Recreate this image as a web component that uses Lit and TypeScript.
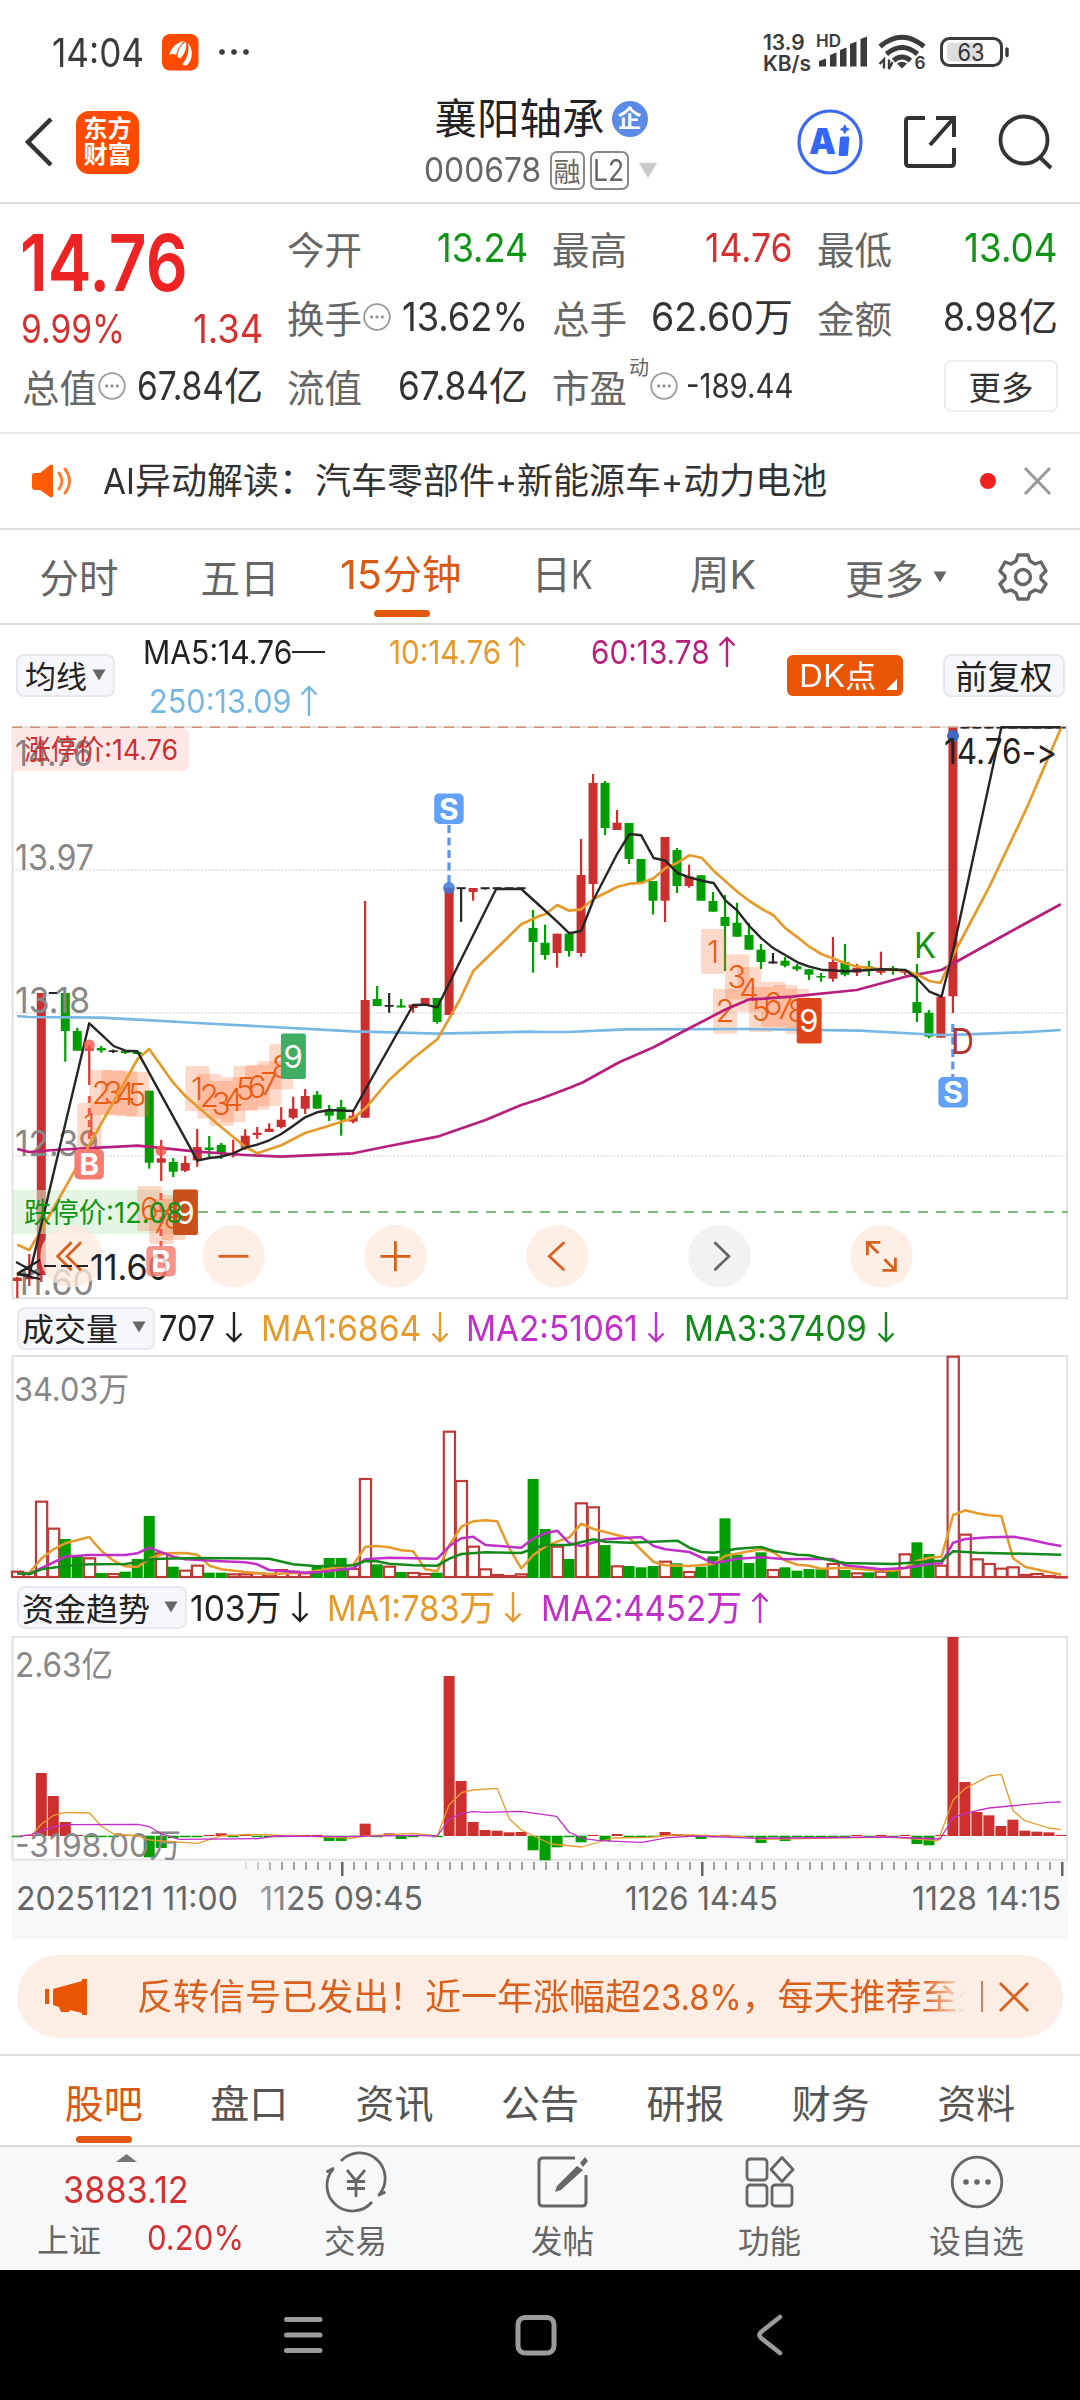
import { LitElement, html, svg, css, nothing } from "lit";
import { customElement, property } from "lit/decorators.js";

/* ---------- text with condensed latin runs ---------- */
const CJK = /[\u3000-\u9fff\uff00-\uffef]/;
function runs(text: string) {
  const out: { t: string; cjk: boolean }[] = [];
  for (const ch of text) {
    const cjk = CJK.test(ch);
    const last = out[out.length - 1];
    if (last && last.cjk === cjk) last.t += ch;
    else out.push({ t: ch, cjk });
  }
  return out;
}

@customElement("mi-text")
class MiText extends LitElement {
  @property() text = "";
  @property({ type: Number }) w = 0;
  static styles = css`
    :host { display: inline-block; white-space: pre; line-height: 1; }
    .n { display: inline-block; transform-origin: 0 50%; }
    .c { display: inline-block; }
  `;
  render() {
    return runs(this.text).map((r) => html`<span class=${r.cjk ? "c" : "n"}>${r.t}</span>`);
  }
  updated() {
    const ns = [...this.renderRoot.querySelectorAll<HTMLElement>(".n")];
    const cs = [...this.renderRoot.querySelectorAll<HTMLElement>(".c")];
    const nat = ns.reduce((a, e) => a + e.offsetWidth, 0);
    const cw = cs.reduce((a, e) => a + e.offsetWidth, 0);
    const s = this.w && nat ? (this.w - cw) / nat : 0.86;
    for (const e of ns) {
      const w = e.offsetWidth;
      e.style.transform = `scaleX(${s})`;
      e.style.marginRight = `${-(1 - s) * w}px`;
    }
  }
}
const mi = (text: string, w = 0, cls = "") => html`<mi-text class=${cls} .text=${text} .w=${w}></mi-text>`;

/* ---------- chart geometry ---------- */
const RED = "#cb2f2e", GREEN = "#009e00", BLACK = "#262626", ORANGE = "#e59a2b", MAG = "#b71f7d", BLUE = "#77b7e4", PINK = "#c02fc8", DGREEN = "#148a1c";
const cx = (i: number) => 17.3 + 11.995 * i;

/* index, colour, body top, body bottom, high, low */
const candles: [number, string, number, number, number, number][] = [
  [0, "r", 1277.7, 1281, 1277, 1298], [1, "r", 1277, 1279.3, 1254, 1286], [2, "r", 993, 1275, 993, 1282],
  [3, "k", 992, 994, 992, 994], [4, "g", 993, 1031, 993, 1061.7], [5, "g", 1031, 1050.7, 1027.7, 1050.7],
  [6, "r", 1048.5, 1050.8, 1045, 1085], [7, "g", 1048, 1050.5, 1046, 1052.7], [8, "k", 1050.3, 1052, 1049.5, 1053],
  [9, "g", 1051, 1053, 1050, 1054], [10, "g", 1052, 1054, 1051, 1054], [11, "g", 1090.7, 1162.7, 1090.7, 1168.7],
  [12, "r", 1158.3, 1162.7, 1140, 1181], [13, "g", 1162, 1171.7, 1158, 1177], [14, "r", 1163, 1170.7, 1156, 1172],
  [15, "r", 1147, 1160.3, 1129, 1166.7], [16, "g", 1147.5, 1150, 1136, 1158], [17, "g", 1145, 1153, 1143, 1159],
  [18, "r", 1153, 1155.3, 1139.7, 1157.5], [19, "r", 1135.7, 1147.7, 1129.3, 1150], [20, "r", 1132.7, 1135, 1127, 1138.7],
  [21, "r", 1128.7, 1132, 1123.3, 1132], [22, "r", 1119.7, 1127, 1107, 1128.5], [23, "r", 1108.7, 1117.7, 1096.7, 1119.3],
  [24, "r", 1096, 1108.7, 1089, 1114], [25, "g", 1094.7, 1108.7, 1091, 1108.7], [26, "g", 1110, 1115.7, 1105, 1121],
  [27, "g", 1107, 1119.7, 1100, 1135.7], [28, "r", 1115.7, 1121.7, 1112, 1123.3], [29, "r", 1000, 1117.7, 901, 1117.7],
  [30, "g", 999, 1006, 986, 1006], [31, "k", 1005, 1006.8, 993, 1012.7], [32, "g", 1005.5, 1007.5, 999, 1007.5],
  [33, "r", 1004.5, 1008, 1004, 1012.7], [34, "r", 998, 1004.7, 998, 1004.7], [35, "g", 998, 1022, 998, 1023.7],
  [36, "r", 888.3, 1015, 888.3, 1015], [37, "k", 887.2, 889.2, 888, 922], [38, "r", 888, 892, 888, 900.7],
  [39, "k", 887.2, 889.2, 888, 889.6], [40, "k", 887.2, 889.2, 888, 889], [41, "k", 887.2, 889.2, 888, 889], [42, "k", 887.2, 889.2, 888, 889],
  [43, "g", 928, 942, 910, 972.7], [44, "g", 942.7, 955, 924.7, 959.7], [45, "r", 933.7, 953, 933.7, 967.7],
  [46, "g", 933.7, 951, 933.7, 956.7], [47, "r", 875, 953, 839, 956.7], [48, "r", 783, 884, 774, 899],
  [49, "g", 783, 828, 781, 835], [50, "r", 822.7, 830, 810, 830], [51, "g", 823, 859, 823, 864],
  [52, "g", 859, 882, 859, 882], [53, "g", 881, 900.7, 881, 914.7], [54, "r", 837, 900.7, 837, 922],
  [55, "g", 850, 886, 848, 893], [56, "r", 876.5, 886, 864.7, 887.7], [57, "g", 875.3, 900.7, 875.3, 900.7],
  [58, "g", 901, 911.7, 892, 911.7], [59, "g", 917, 926, 895, 971], [60, "g", 922.7, 936.7, 902.7, 936.7],
  [61, "g", 935, 949.7, 923, 949.7], [62, "g", 949.7, 962, 944, 969], [63, "k", 961.5, 963.5, 953, 963.5],
  [64, "g", 960.7, 965.7, 957, 967.3], [65, "g", 966.3, 969.3, 964, 971], [66, "g", 969.3, 974.7, 969.3, 980],
  [67, "g", 976, 977.6, 973, 981.7], [68, "r", 962, 978.7, 937, 981.7], [69, "g", 962, 974.7, 944, 976.3],
  [70, "r", 967.7, 972.7, 964, 976], [71, "g", 966.3, 971, 960.7, 976], [72, "r", 969.3, 972.7, 951.7, 974.7],
  [73, "g", 968, 970, 966, 974.7], [74, "r", 970, 972.7, 970, 975], [75, "g", 1002, 1013, 964, 1022],
  [76, "g", 1012.7, 1036.7, 1010, 1038.3], [77, "r", 996.7, 1037.7, 996.7, 1037.7], [78, "r", 728, 996.3, 728, 1013],
];
for (let i = 79; i < 88; i++) candles.push([i, "k", 727, 728.6, 727, 728.6]);
const col: Record<string, string> = { r: RED, g: GREEN, k: BLACK };

/* Traces are stored in two halves, each on a 2.904 × 3 grid. */
type P = number[];
const left = (y0: number, ...v: P) => { const o: P = []; for (let i = 0; i < v.length; i += 2) o.push(v[i] / 2.904, y0 + v[i + 1] / 3); return o; };
const right = (y0: number, ...v: P) => { const o: P = []; for (let i = 0; i < v.length; i += 2) o.push(540 + v[i] / 2.904, y0 + v[i + 1] / 3); return o; };
const wide = (y0: number, ...v: P) => { const o: P = []; for (let i = 0; i < v.length; i += 2) o.push(v[i] / 1.452, y0 + v[i + 1] / 3); return o; };
const line = (p: P, c: string, w = 2.7) => svg`<polyline points=${p.map((n) => n.toFixed(1)).join(" ")} fill="none" stroke=${c} stroke-width=${w} stroke-linejoin="round"/>`;

const ma5 = [
  ...left(1000, 50, 822, 85, 826, 259, 70, 294, 103, 330, 138, 364, 152, 399, 154, 573, 482, 608, 474, 643, 470, 677, 460, 712, 443, 747, 434, 782, 421, 817, 402, 851, 378, 886, 352, 921, 337, 956, 330, 1026, 333, 1200, 15, 1235, 14, 1270, 22),
  ...left(710, 1441, 537, 1514, 537),
  ...right(710, 0, 588, 50, 635, 85, 670, 120, 663, 155, 570, 190, 500, 225, 430, 260, 372, 294, 376, 330, 444, 364, 452, 399, 489, 434, 502, 469, 512, 504, 519, 539, 572, 573, 602, 608, 648, 643, 685, 678, 715, 748, 757, 782, 770, 817, 779, 887, 784, 957, 780, 992, 778, 1061, 780, 1096, 806, 1131, 845, 1166, 860, 1200, 720, 1340, 52, 1512, 52),
];
const ma10 = [
  ...left(1000, 50, 734, 85, 750, 120, 690, 399, 178, 433, 147, 503, 248, 538, 288, 643, 382, 712, 440, 747, 460, 817, 436, 886, 399, 956, 377, 1026, 354, 1061, 325, 1130, 240, 1200, 175, 1270, 118, 1335, 0),
  ...left(710, 1375, 782, 1514, 643),
  ...right(710, 0, 617, 15, 613, 50, 585, 85, 602, 120, 598, 155, 567, 190, 549, 225, 530, 260, 521, 295, 519, 330, 505, 364, 475, 399, 458, 434, 436, 469, 443, 504, 482, 573, 545, 608, 573, 643, 596, 678, 616, 713, 655, 748, 682, 782, 710, 817, 732, 887, 760, 922, 770, 992, 778, 1061, 782, 1096, 794, 1131, 813, 1163, 819, 1200, 735, 1305, 530, 1415, 290, 1514, 52),
];
const ma60 = [
  ...left(1000, 50, 447, 85, 456, 155, 450, 399, 437, 573, 455, 712, 465, 817, 470, 1026, 460, 1130, 438, 1270, 410, 1410, 360, 1514, 315),
  ...right(1000, 0, 297, 90, 262, 125, 247, 230, 187, 330, 142, 435, 84, 540, 28),
  ...right(710, 608, 868, 650, 866, 730, 860, 920, 840, 1061, 800, 1166, 780, 1350, 674, 1512, 583),
];
const ma250 = [
  ...left(1000, 50, 48, 85, 51, 294, 53, 400, 59, 573, 69, 1026, 94, 1270, 101, 1540, 95),
  ...right(1000, 0, 96, 80, 96, 250, 88, 600, 87, 930, 92, 1160, 105, 1240, 103, 1400, 97, 1512, 90),
];

/* volume bar tops, in thirds of a pixel below y=1300 */
const vol = "r815 r819 r605 r686 g717 g768 r775 g819 r822 g815 g777 g648 r760 g800 r812 r797 g818 g818 r823 r823 r820 r824 r810 r815 r820 g797 g774 g774 r807 r537 g793 r800 g816 r819 r822 g818 r395 r543 r740 r808 r825 r828 r823 g537 g687 r740 g777 r610 r622 g735 r799 g798 g802 g798 r785 g790 r816 g800 g769 g655 g764 g789 g757 r810 g802 g812 g807 g808 r792 g810 r820 g817 r815 g812 r763 g727 g762 r797 r170 r704 r778 r792 r806 r802 r825 r822 r828 r831".split(" ");
const v1 = [
  ...left(1300, 50, 822, 85, 818, 120, 776, 155, 748, 190, 730, 259, 711, 294, 752, 330, 782, 364, 799, 399, 801, 433, 776, 480, 760, 538, 759, 573, 764, 608, 797, 643, 808, 712, 816, 782, 822, 886, 818, 956, 806, 1026, 794, 1061, 740, 1095, 738, 1130, 742, 1165, 751, 1200, 754, 1235, 808, 1270, 814, 1305, 735, 1340, 680, 1374, 664, 1410, 661, 1444, 664, 1479, 745, 1514, 805, 1549, 765),
  ...right(1300, 15, 740, 50, 725, 85, 712, 120, 671, 155, 687, 260, 715, 330, 786, 364, 796, 434, 798, 504, 792, 539, 767, 643, 747, 678, 757, 713, 782, 748, 794, 782, 797, 817, 806, 887, 803, 957, 810, 1026, 812, 1061, 803, 1096, 782, 1131, 773, 1166, 770, 1200, 645, 1235, 631, 1270, 640, 1305, 646, 1340, 649, 1374, 775, 1410, 801, 1514, 824),
];
const v2 = [
  ...left(1300, 50, 820, 85, 822, 190, 770, 259, 765, 364, 765, 399, 760, 433, 743, 503, 770, 538, 778, 643, 784, 712, 787, 747, 793, 782, 810, 886, 818, 930, 816, 1026, 805, 1061, 778, 1130, 773, 1270, 776, 1305, 738, 1340, 715, 1374, 710, 1410, 735, 1514, 743, 1549, 715),
  ...right(1300, 15, 700, 50, 692, 85, 730, 120, 738, 190, 718, 294, 711, 330, 738, 364, 748, 434, 756, 504, 790, 573, 776, 643, 772, 713, 778, 817, 776, 852, 778, 887, 796, 992, 808, 1061, 804, 1131, 792, 1166, 790, 1200, 728, 1235, 717, 1305, 712, 1374, 710, 1410, 716, 1480, 732, 1514, 738),
];
const v3 = [
  ...left(1300, 50, 820, 85, 822, 120, 808, 190, 798, 259, 793, 364, 792, 399, 787, 433, 778, 468, 776, 573, 774, 782, 776, 851, 793, 921, 799, 1026, 796, 1061, 783, 1095, 784, 1130, 791, 1200, 796, 1270, 797, 1305, 776, 1340, 762, 1410, 757, 1514, 759, 1549, 745),
  ...right(1300, 15, 735, 85, 735, 155, 718, 190, 725, 260, 728, 399, 722, 434, 743, 469, 756, 504, 758, 573, 746, 643, 741, 678, 753, 748, 764, 782, 766, 852, 783, 887, 789, 1026, 792, 1096, 787, 1166, 782, 1200, 754, 1270, 758, 1514, 764),
];

/* fund flow bar ends, in thirds of a pixel below y=1580 (zero line at 767) */
const fund: Record<number, number> = { 2: 579, 3: 648, 4: 726, 11: 831, 12: 803, 13: 773, 17: 760, 26: 782, 27: 782, 29: 731, 31: 760, 32: 776, 36: 288, 37: 603, 38: 726, 39: 750, 40: 752, 41: 757, 42: 756, 43: 810, 44: 840, 45: 801, 47: 786, 49: 782, 50: 762, 51: 773, 52: 773, 54: 756, 55: 762, 57: 776, 62: 788, 64: 782, 75: 791, 76: 795, 78: 171, 79: 606, 80: 696, 81: 706, 82: 738, 83: 719, 84: 752, 85: 755, 86: 757 };
const smallNeg = new Set([0, 6, 7, 8, 14, 15, 18, 20, 21, 22, 28, 30, 33, 35, 46, 53, 58, 60, 61, 63, 65, 66, 67, 68, 69, 71, 73]);
const f1 = wide(1580, 45, 768, 60, 733, 78, 706, 95, 697, 130, 699, 147, 738, 165, 762, 200, 768, 217, 780, 265, 787, 287, 790, 320, 768, 360, 763, 460, 770, 510, 775, 530, 768, 600, 760, 635, 768, 652, 675, 670, 638, 687, 630, 722, 625, 740, 718, 757, 750, 775, 768, 800, 792, 845, 801, 890, 774, 940, 772, 980, 765, 1000, 765, 1080, 770, 1105, 778, 1290, 771, 1362, 782, 1384, 660, 1401, 626, 1436, 588, 1454, 583, 1471, 692, 1488, 722, 1523, 744, 1540, 749);
const f2 = wide(1580, 25, 770, 45, 764, 78, 740, 100, 734, 200, 733, 217, 740, 235, 762, 260, 778, 375, 776, 400, 768, 500, 770, 600, 766, 635, 768, 652, 718, 670, 700, 687, 695, 705, 697, 757, 694, 808, 709, 826, 756, 845, 775, 870, 782, 932, 787, 970, 773, 1010, 768, 1100, 775, 1290, 771, 1365, 777, 1384, 713, 1401, 700, 1436, 684, 1523, 667, 1540, 666);

const label = (t: string, x: number, y: number, w: number, size: number, fill: string, extra = "") =>
  svg`<text class=${extra} x=${x} y=${y} font-size=${size} fill=${fill} textLength=${w} lengthAdjust="spacingAndGlyphs">${t}</text>`;

/* countdown tags: index, top, digit */
const tags: [number, number, string][] = [
  [6, 1102.7, "1"], [7, 1070, "2"], [8, 1070, "3"], [9, 1071, "4"], [10, 1072, "5"], [11, 1186, "6"], [12, 1199, "7"], [13, 1195, "8"],
  [15, 1066, "1"], [16, 1073.7, "2"], [17, 1081, "3"], [18, 1077.3, "4"], [19, 1066, "5"], [20, 1064.7, "6"], [21, 1061, "7"], [22, 1044.3, "8"],
  [58, 929, "1"], [59, 988.7, "2"], [60, 954.3, "3"], [61, 967, "4"], [62, 987, "5"], [63, 981.7, "6"], [64, 985, "7"], [65, 988.7, "8"],
];
const nines: [number, number, string][] = [[14, 1189.5, "#c9501a"], [23, 1033.5, "#40ad64"], [66, 998, "#df4518"]];
const sq = (x: number, y: number, t: string, fill: string) => svg`<rect x=${x} y=${y} width="29.5" height="30.5" rx="5" fill=${fill}/>
  <text class="b" x=${x + 14.7} y=${y + 26} font-size="30" fill="#fff" text-anchor="middle">${t}</text>`;
const ball = (x: number, body: unknown, grey = false) => svg`<g transform="translate(${x} 1256.3)"><circle r="31.3" fill=${grey ? "#ededed" : "#fdeade"} opacity=".75"/>
  <g fill="none" stroke=${grey ? "#666" : "#d9601d"} stroke-width="2.8">${body}</g></g>`;

const info = html`<svg class="info" width="28" height="28" viewBox="0 0 28 28"><circle cx="14" cy="14" r="12.8" fill="none" stroke="#999" stroke-width="1.8"/><g fill="#999"><circle cx="8.6" cy="14" r="1.7"/><circle cx="14" cy="14" r="1.7"/><circle cx="19.4" cy="14" r="1.7"/></g></svg>`;
const tri = (c = "") => html`<svg class="tri ${c}" width="14" height="12" viewBox="0 0 14 12"><path d="M.5 .5h13L7 11.5z" fill="currentColor"/></svg>`;
const arrow = (dir: string) => html`<svg class="arrow" width="18" height="34" viewBox="0 0 18 34"><path d=${dir === "up" ? "M9 32V3M1.5 10.5 9 3l7.500 7.500" : "M9 1v29M1.500 22.500 9 30l7.500-7.500"} fill="none" stroke="currentColor" stroke-width="2.400"/></svg>`;

interface Leg { gap: number; t: string; w: number; c: string; ag?: number; dir?: string }
const legend = (items: Leg[]) => items.map((l) => html`<span class="leg" style="margin-left:${l.gap}px;color:${l.c}">${mi(l.t, l.w)}${l.dir ? html`<span class="ar" style="margin-left:${l.ag}px">${arrow(l.dir)}</span>` : nothing}</span>`);

@customElement("app-root")
class AppRoot extends LitElement {
  static styles = css`
    :host { display: block; width: 1080px; height: 2400px; overflow: hidden; background: #fff; color: #333; font-family: Inter, "Noto Sans CJK SC", sans-serif; font-weight: 400; }
    * { box-sizing: border-box; }
    svg { display: block; flex: none; overflow: visible; }
    .row { display: flex; align-items: center; }
    .status { height: 92px; padding: 12px 71px 0 52px; color: #3b3b3b; }
    .time { font-size: 39px; margin-right: 18px; }
    .dots { margin-left: 20px; }
    .grow { flex: 1; }
    .speed { font-size: 21px; font-weight: 600; display: flex; flex-direction: column; gap: 0; margin-right: 6px; padding-top: 2px; }
    .sig { margin-right: 10px; }
    .wifi { margin-right: 13px; }
    .st { font: 600 17px Inter, sans-serif; }
    .bt { font: 400 24px Inter, sans-serif; }
    .top { height: 112px; border-bottom: 2px solid #d9d9d9; padding: 0 28px 10px 24px; }
    .logo { width: 63px; height: 63px; border-radius: 13px; background: #ff4a00; color: #fff; font-size: 24px; font-weight: 700; line-height: 26px; text-align: center; padding-top: 5px; margin-left: 23px; }
    .name { flex: 1; display: flex; flex-direction: column; align-items: center; padding: 4px 0 0 146px; }
    .title { font-size: 42.500px; line-height: 52px; color: #222; height: 52px; }
    .qi { width: 36px; height: 36px; border-radius: 50%; background: #5b8be5; color: #fff; font-size: 24px; font-weight: 700; line-height: 36px; text-align: center; margin-left: 7px; }
    .code { font-size: 34px; color: #666; height: 50px; }
    .box { border: 2px solid #888; border-radius: 7px; height: 39px; width: 35px; display: flex; align-items: center; justify-content: center; font-size: 27px; margin-left: 8px; }
    .box.l2 { width: 39px; margin-left: 5px; font-size: 30px; }
    .code .tri { color: #ccc; margin-left: 9px; width: 20px; height: 17px; }
    .ai { margin-right: 40px; } .share { margin-right: 41px; }
    .ait { font: 900 36px Inter, sans-serif; }
    .quote { height: 230px; border-bottom: 2px solid #e9e9e9; padding: 9px 22px 0 23px; display: grid; grid-template-columns: repeat(4, 1fr); grid-template-rows: 69px 69px 69px; column-gap: 25px; font-size: 38px; color: #333; }
    .cell { display: flex; align-items: center; justify-content: space-between; }
    .cell .l { color: #666; display: flex; align-items: center; font-size: 37.500px; margin-left: -1px; }
    .cell .v { font-size: 40px; }
    .info { margin-left: 1px; }
    .mix { font-size: 39px; }
    .g { color: #0f9414; } .r { color: #d3312f; }
    .price { font-size: 79px; font-weight: 600; color: #ee2424; padding-top: 1px; margin-left: -3px; }
    .chg { font-size: 40px; padding-top: 25px; margin-left: -2px; }
    .dong { font-size: 20px; align-self: flex-start; margin: -6px 0 0 2px; }
    .pe { font-size: 34px; }
    .more { width: 114px; height: 52px; border: 2px solid #ececec; border-radius: 7px; margin-left: auto; display: flex; align-items: center; justify-content: center; font-size: 32.500px; }
    .news { height: 96px; border-bottom: 2px solid #dcdcdc; padding: 0 29px 0 32px; font-size: 36px; }
    .news mi-text { margin-left: 31px; }
    .dot { width: 16px; height: 16px; border-radius: 50%; background: #f02020; margin-right: 28px; }
    .tabs { height: 95px; border-bottom: 2px solid #dcdcdc; font-size: 39.500px; color: #666; }
    .tab { width: 161px; height: 93px; display: flex; align-items: center; justify-content: center; padding-right: 3px; padding-bottom: 2px; }
    .on { color: #d95a14; position: relative; }
    .on::after { content: ""; position: absolute; bottom: 6px; left: 50%; width: 56px; margin-left: -29px; height: 7px; border-radius: 4px; background: #e2580f; }
    .tri { color: #666; }
    .ma { height: 100px; padding: 0 15px 0 16px; font-size: 33px; display: flex; }
    .btn { background: #f6f7fa; border: 2px solid #e6e8ec; border-radius: 8px; height: 43px; display: flex; align-items: center; font-size: 32px; color: #222; flex: none; padding-bottom: 2px; }
    .ma .btn { margin-top: 29px; }
    .avg { width: 99px; padding-left: 7px; font-size: 31px; } .avg .tri { margin-left: 5px; }
    .lines { width: 672px; padding-top: 10px; display: flex; flex-direction: column; gap: 15px; flex: none; }
    .lines .row { height: 34px; }
    .leg { display: flex; align-items: center; }
    .dk { margin-top: 30px; width: 116px; height: 41px; background: #e95504; border-radius: 6px; color: #fff; font-size: 31px; padding: 0 6px 6px 12px; display: flex; justify-content: space-between; flex: none; }
    .dk mi-text { align-self: center; padding-top: 6px; } .dk svg { align-self: flex-end; }
    .fq { margin-left: auto; width: 122px; padding-left: 10px; font-size: 32.500px; }
    .lg { height: 52px; padding-left: 17px; font-size: 36px; }
    .lg .btn { padding-left: 3px; }
    .vb { width: 138px; } .fb { width: 170px; }
    .lg .btn .tri { margin-left: 14px; }
    text { font-family: Inter, "Noto Sans CJK SC", sans-serif; } .b { font-weight: 700; } .lt { font-weight: 300; } .raw { font-feature-settings: "calt" 0; }
    .banner { margin: 16px 17px; height: 83px; border-radius: 42px; background: #fdeee5; color: #d9601d; font-size: 36px; padding: 0 34px 0 28px; }
    .clip { width: 838px; overflow: hidden; margin-left: 50px; line-height: 50px; -webkit-mask-image: linear-gradient(90deg, #000 94%, transparent 99%); mask-image: linear-gradient(90deg, #000 94%, transparent 99%); }
    .bar { width: 2px; height: 31px; background: #df8150; margin: 0 16px 0 7px; }
    .sub { height: 91px; border-top: 2px solid #dcdcdc; font-size: 39px; color: #555; padding: 0 31px; }
    .sub .tab { flex: 1; height: 89px; padding: 0; } .sub .on { color: #d95a14; } .sub .on::after { bottom: 2px; margin-left: -28px; }
    .foot { height: 125px; border-top: 2px solid #d9d9d9; background: #f7f8fa; color: #666; font-size: 31.500px; display: flex; }
    .idx { width: 251px; display: flex; flex-direction: column; }
    .idx .up { margin: 7px 0 0 116px; }
    .p { font-size: 37px; margin: 9px 0 0 63px; line-height: 37px; height: 40px; }
    .idx .row { padding-left: 37px; font-size: 32px; height: 46px; margin-top: 4px; } .idx .row .r { font-size: 34px; margin-left: 46px; }
    .act { width: 207px; display: flex; flex-direction: column; align-items: center; padding: 8px 0 0 2px; gap: 11px; line-height: 44px; }
    .nav { height: 130px; background: #000; }
  `;

  private mainChart() {
    return html`<svg width="1080" height="577" viewBox="0 725 1080 577">
      <g fill="none" stroke="#e2e2e2" stroke-width="2"><path d="M12.500 727V1298.300H1067V727" /><path d="M12 727H1067" /></g>
      <path d="M12 870H1067M12 1013H1067M12 1156H1067" stroke="#ddd" stroke-width="1.500" stroke-dasharray="2 1.500" />
      <path d="M12 727.300H1067" stroke="#d29078" stroke-width="1.500" stroke-dasharray="10 8" />
      <path d="M198 1212H1068" stroke="#7fbb7f" stroke-width="2" stroke-dasharray="10 8" />
      <path d="M12 728H183a6 6 0 0 1 6 6V765a6 6 0 0 1-6 6H12z" fill="#fde8e7"/>
      ${label("14.76", 15, 766, 78, 36, "#8a8080")}${label("13.97", 15, 870, 79, 36, "#888")}
      ${label("涨停价:14.76", 24, 760, 154, 28, "#cf2e2e")}
      ${candles.map(([i, c, a, b, h, l]) => svg`<rect x=${cx(i) - 4.5} y=${a} width="9" height=${b - a} fill=${col[c]}/><rect x=${cx(i) - 1.1} y=${h} width="2.200" height=${l - h} fill=${col[c]}/>`)}
      ${label("13.18", 15, 1013, 75, 36, "#888")}${label("12.39", 15, 1156, 84, 36, "#888")}${label("11.60", 15, 1295, 79, 36, "#888")}
      <path d="M12 1190H182V1234H12z" fill="#cdeccd" opacity=".55" />
      ${tags.map(([i, y]) => svg`<rect x=${cx(i) - 12} y=${y} width="24.200" height="45" rx="2" fill="#fb7035" opacity=".27"/>`)}
      ${tags.map(([i, y, t]) => svg`<text class="lt" x=${cx(i)} y=${y + 33.5} font-size="31" fill="#ec5b12" text-anchor="middle">${t}</text>`)}
      <g stroke="#ee5a4c" stroke-width="3" stroke-dasharray="7 5"><path d="M89.300 1096V1149M161 1193V1246" /></g>
      <g stroke="#5e96e4" stroke-width="3.200" stroke-dasharray="8 4.500"><path d="M449 825V888M952.800 1024V1077" /></g>
      ${line(ma250, BLUE)}${line(ma60, MAG)}${line(ma10, ORANGE)}${line(ma5, BLACK, 2.4)}
      ${nines.map(([i, y, f]) => svg`<rect x=${cx(i) - 12.3} y=${y} width="25" height="45.500" rx="2" fill=${f}/><text x=${cx(i)} y=${y + 34} font-size="31" fill="#fff" text-anchor="middle">9</text>`)}
      ${label("跌停价:12.08", 24, 1223, 159, 28, "#119411")}
      <circle cx="89.300" cy="1045" r="5.500" fill="#f0554a" opacity=".8" /><circle cx="161" cy="1150.700" r="5.500" fill="#f0554a" opacity=".8" />
      <circle cx="449" cy="888" r="6" fill="#3f74d8" opacity=".85" /><circle cx="953" cy="736" r="6" fill="#3f66c8" />
      ${sq(74.4, 1149, "B", "#f77c70")}
      ${sq(434.2, 793.5, "S", "#62a1f8")}${sq(938.4, 1077, "S", "#62a1f8")}
      ${label("K", 914, 958, 22, 35, "#119411")}${label("D", 951, 1054, 23, 35, "#ad3532")}
      ${label("14.76->", 944, 764, 113, 35, "#222", "raw")}
      ${ball(71.6, svg`<path d="M0 -14 -14 0 0 14M9.500 -14 -4.500 0 9.500 14"/>`)}
      ${ball(233.5, svg`<path d="M-15 0H15"/>`)}${ball(395.4, svg`<path d="M-15 0H15M0 -15V15"/>`)}
      ${ball(557.3, svg`<path d="M7 -14 -8 0 7 14"/>`)}${ball(719.4, svg`<path d="M-5 -14 9.500 0-5 14"/>`, true)}
      ${ball(881.4, svg`<path d="M-14 -1V-14H-1M-14-14-3-3M14 1.500V14H1M14 14 3 3"/>`)}
      <path d="M17 1274 40 1260M17 1274 40 1279M16 1262 40 1275M44 1266H56M61 1266H72M77 1266H88" stroke="#222" stroke-width="2.200" fill="none" />
      ${label("11.60", 90, 1280, 79, 36, "#222")}
      <g opacity=".82">${sq(146.3, 1246, "B", "#f77c70")}</g>
    </svg>`;
  }

  private volChart() {
    return html`<svg width="1080" height="226" viewBox="0 1354 1080 226">
      <path d="M12.500 1577V1356H1067V1577" fill="none" stroke="#e2e2e2" stroke-width="2" />
      ${label("34.03万", 14, 1401, 115, 33, "#888")}
      ${vol.map((v, i) => {
        const y = 1300 + +v.slice(1) / 3, x = cx(i);
        return v[0] === "g" ? svg`<rect x=${x - 5.5} y=${y} width="11" height=${1578 - y} fill=${GREEN}/>`
          : svg`<rect x=${x - 5.3} y=${y} width="11.200" height=${Math.max(0.5, 1577 - y)} fill="#fff" stroke="#bd3a38" stroke-width="2.200"/>`;
      })}
      ${line(v1, ORANGE, 2.5)}${line(v2, PINK, 2.5)}${line(v3, DGREEN, 2.5)}
    </svg>`;
  }

  private fundChart() {
    const z = 1835.7;
    return html`<svg width="1080" height="304" viewBox="0 1635 1080 304">
      <defs><linearGradient id="fade" gradientUnits="userSpaceOnUse" x1="240" x2="300" y1="0" y2="0"><stop offset="0" stop-color="#666" stop-opacity=".1"/><stop offset=".35" stop-color="#666" stop-opacity=".6"/><stop offset="1" stop-color="#666"/></linearGradient></defs>
      <rect x="12" y="1861" width="1056" height="78" fill="#f7f8fa" />
      <rect x="12.500" y="1637" width="1054.500" height="222.700" fill="none" stroke="#e2e2e2" stroke-width="2" />
      ${label("2.63亿", 15, 1677, 98, 34, "#888")}
      ${Array.from({ length: 88 }, (_, i) => {
        const e = fund[i] ? 1580 + fund[i] / 3 : smallNeg.has(i) ? z + 1.2 : z - 0.8;
        const neg = e > z;
        return svg`<rect x=${cx(i) - 5.5} y=${neg ? z : e} width="11" height=${Math.abs(e - z) + 0.3} fill=${neg ? GREEN : RED}/>`;
      })}
      ${label("-3198.00万", 15, 1857, 166, 33, "#888")}
      ${line(f1, ORANGE, 1.3)}${line(f2, PINK, 1.3)}
      ${Array.from({ length: 68 }, (_, k) => svg`<rect x=${245.2 + k * 12} y="1862" width="1.600" height="8" fill="#888" opacity=${k < 3 ? 0.25 + k * 0.25 : 1}/>`)}
      <rect x="341" y="1862" width="2.500" height="14" fill="#666"/><rect x="701" y="1862" width="2.500" height="14" fill="#666"/><rect x="1061" y="1862" width="2.500" height="14" fill="#666"/>
      ${label("20251121 11:00", 16, 1910, 222, 33, "#666")}${label("1125 09:45", 260, 1910, 163, 33, "url(#fade)")}
      ${label("1126 14:45", 625, 1910, 153, 33, "#666")}${label("1128 14:15", 912, 1910, 149, 33, "#666")}
    </svg>`;
  }

  render() {
    const o = "#e59a2b";
    return html`
      <div class="row status">
        ${mi("14:04", 92, "time")}
        <svg width="37" height="37" viewBox="0 0 37 37"><rect width="36.500" height="36.500" rx="8" fill="#ff4a00"/><path d="M7 21C9 14 15 8 22 7c-4 4-7 9-8 14-2-1.500-5-1.500-7 0zM15.500 23c0-6 3-12 8.500-15.500 1 6-1 12-5.500 17zM20.500 30c5-6 7-13 5.500-21 5 6 5 14 1 20-2 3-5 3.500-6.500 1z" fill="#fff"/></svg>
        <svg class="dots" width="30" height="6" viewBox="0 0 30 6"><g fill="#3b3b3b"><circle cx="3" cy="3" r="2.800"/><circle cx="15" cy="3" r="2.800"/><circle cx="27" cy="3" r="2.800"/></g></svg>
        <div class="grow"></div>
        <div class="speed">${mi("13.9", 42)}${mi("KB/s", 48)}</div>
        <svg class="sig" width="51" height="34" viewBox="816 36 51 34"><text class="st" x="815" y="48" fill="#3b3b3b" textLength="25" lengthAdjust="spacingAndGlyphs">HD</text><path d="M818 67.500V62l7-2.500v8zM829 67.500V56l6.500-2.500v14zM839 67.500V51l6.500-2.500v19zM849 67.500V45l6.500-2.500v25zM859.500 67.500V40l6.500-2.500v30z" fill="#3b3b3b"/></svg>
        <svg class="wifi" width="48" height="36" viewBox="878 35 48 36"><g fill="none" stroke="#3b3b3b" stroke-width="5"><path d="M880 47.500Q902 29 924 47.500M886.500 55Q902 42 917.500 55M893.500 61.500Q902 54.500 910.500 61.500"/></g><path d="M897 64.500Q902 61 907 64.500L902 69.500z" fill="#3b3b3b"/><path d="M884 69.500V60.500l-4.500 4.500M889 60.500v9.500l3.500-7" fill="none" stroke="#3b3b3b" stroke-width="2.400"/><text class="st" x="914.500" y="70" fill="#3b3b3b" textLength="11" lengthAdjust="spacingAndGlyphs">6</text></svg>
        <svg width="70" height="32" viewBox="939 36 70 32"><rect x="941.500" y="38.500" width="60" height="27" rx="8" fill="#fff" stroke="#3b3b3b" stroke-width="3"/><path d="M951 42.500H983V61.500H951q-4 0-4-4v-11q0-4 4-4z" fill="#ddd"/><path d="M1007 49v6.500" stroke="#3b3b3b" stroke-width="3.500" stroke-linecap="round"/><text class="bt" x="957.500" y="60.800" fill="#333" textLength="27" lengthAdjust="spacingAndGlyphs">63</text></svg>
      </div>
      <div class="row top">
        <svg width="29" height="50" viewBox="0 0 29 50"><path d="M27 2 4 25 27 48" fill="none" stroke="#333" stroke-width="4.500"/></svg>
        <div class="logo">东方<br/>财富</div>
        <div class="name">
          <div class="row title"><span>襄阳轴承</span><span class="qi">企</span></div>
          <div class="row code">${mi("000678", 117)}<span class="box">融</span><span class="box l2">${mi("L2", 31)}</span>${tri()}</div>
        </div>
        <svg class="ai" width="66" height="66" viewBox="0 0 66 66"><circle cx="33" cy="33" r="31" fill="none" stroke="#3a68f0" stroke-width="3.200"/><text class="ait" x="12" y="44.500" fill="#3566f5" textLength="27" lengthAdjust="spacingAndGlyphs">A</text><path d="M44.500 27.500H51q1.500 0 1.300 1.500L51 45.500q0 1.500-1.500 1.500H43q-1.500 0-1.400-1.500L43 29q0-1.500 1.500-1.500z" fill="#3566f5"/><path d="M47.800 15l1.800 3.500 3.400 1.800-3.400 1.800-1.800 3.500-1.800-3.500-3.400-1.800 3.400-1.800z" fill="#3566f5"/></svg>
        <svg class="share" width="54" height="54" viewBox="0 0 54 54"><path d="M22 3H6Q3 3 3 6V48q0 3 3 3H48q3 0 3-3V33M33 3H51V22M50 4 27 30" fill="none" stroke="#333" stroke-width="4"/></svg>
        <svg width="54" height="54" viewBox="0 0 54 54"><circle cx="26" cy="25" r="23.500" fill="none" stroke="#333" stroke-width="3.800"/><path d="M41.500 42 53 53" stroke="#333" stroke-width="4"/></svg>
      </div>
      <div class="quote">
        <div class="price">${mi("14.76", 168)}</div>
        <div class="cell"><span class="l">今开</span>${mi("13.24", 91, "v g")}</div>
        <div class="cell"><span class="l">最高</span>${mi("14.76", 88, "v r")}</div>
        <div class="cell"><span class="l">最低</span>${mi("13.04", 94, "v g")}</div>
        <div class="cell chg r">${mi("9.99%", 104)}${mi("1.34", 70)}</div>
        <div class="cell"><span class="l">换手${info}</span>${mi("13.62%", 126, "v")}</div>
        <div class="cell"><span class="l">总手</span>${mi("62.60万", 142, "mix")}</div>
        <div class="cell"><span class="l">金额</span>${mi("8.98亿", 115, "mix")}</div>
        <div class="cell"><span class="l">总值${info}</span>${mi("67.84亿", 126, "mix")}</div>
        <div class="cell"><span class="l">流值</span>${mi("67.84亿", 130, "mix")}</div>
        <div class="cell"><span class="l">市盈<span class="dong">动</span>${info}</span>${mi("-189.44", 107, "pe")}</div>
        <div class="cell"><span class="more">更多</span></div>
      </div>
      <div class="row news">
        <svg width="40" height="34" viewBox="0 0 40 34"><path d="M0 12q0-3 3-3h5L18 1q3-1.500 3 2V31q0 3.500-3 2L8 26H3q-3 0-3-3z" fill="#ff5a05"/><path d="M27 9q6 8 0 16M33 5q9 12 0 24" fill="none" stroke="#ff7a35" stroke-width="3" stroke-linecap="round"/></svg>
        ${mi("AI异动解读：汽车零部件+新能源车+动力电池", 725)}
        <div class="grow"></div><span class="dot"></span>
        <svg width="27" height="28" viewBox="0 0 27 28"><path d="M1 1 26 27M26 1 1 27" stroke="#999" stroke-width="3"/></svg>
      </div>
      <div class="row tabs">
        <span class="tab">分时</span><span class="tab">五日</span><span class="tab on">${mi("15分钟", 121)}</span><span class="tab">${mi("日K", 62)}</span><span class="tab">${mi("周K", 67)}</span>
        <span class="row" style="margin-left:40px">更多</span><span style="margin-left:9px">${tri()}</span>
        <svg style="margin-left:52px" width="48" height="50" viewBox="0 0 48 50"><path d="M19 3h10l2 6 5 3 6-2 5 9-5 5v3l5 5-5 8-6-2-5 3-2 6H19l-2-6-5-3-6 2-5-8 5-5v-3l-5-5 5-9 6 2 5-3z" fill="none" stroke="#666" stroke-width="3.400" stroke-linejoin="round"/><circle cx="24" cy="25" r="7.500" fill="none" stroke="#666" stroke-width="3.400"/></svg>
      </div>
      <div class="ma">
        <span class="btn avg">均线${tri()}</span>
        <div class="lines">
          <div class="row">${legend([{ gap: 28, t: "MA5:14.76", w: 149, c: "#222" }])}<svg width="33" height="4"><path d="M0 2H33" stroke="#222" stroke-width="2"/></svg>${legend([{ gap: 64, t: "10:14.76", w: 112, c: o, ag: 7, dir: "up" }, { gap: 65, t: "60:13.78", w: 119, c: MAG, ag: 8, dir: "up" }])}</div>
          <div class="row">${legend([{ gap: 34, t: "250:13.09", w: 143, c: BLUE, ag: 8, dir: "up" }])}</div>
        </div>
        <span class="dk">${mi("DK点", 77)}<svg width="11" height="11"><path d="M11 0V11H0z" fill="#fff"/></svg></span>
        <span class="btn fq">前复权</span>
      </div>
      ${this.mainChart()}
      <div class="row lg"><span class="btn vb">成交量${tri()}</span>${legend([
        { gap: 4, t: "707", w: 56, c: "#222", ag: 10, dir: "down" }, { gap: 18, t: "MA1:6864", w: 160, c: o, ag: 9, dir: "down" },
        { gap: 17, t: "MA2:51061", w: 172, c: PINK, ag: 10, dir: "down" }, { gap: 19, t: "MA3:37409", w: 183, c: DGREEN, ag: 10, dir: "down" }])}</div>
      ${this.volChart()}
      <div class="row lg" style="height:55px"><span class="btn fb">资金趋势${tri()}</span>${legend([
        { gap: 3, t: "103万", w: 92, c: "#222", ag: 9, dir: "down" }, { gap: 18, t: "MA1:783万", w: 169, c: o, ag: 9, dir: "down" },
        { gap: 19, t: "MA2:4452万", w: 201, c: PINK, ag: 9, dir: "up" }])}</div>
      ${this.fundChart()}
      <div class="row banner">
        <svg width="42" height="38" viewBox="0 0 42 38"><path d="M0 11h4V26H0zM8 11 37 3V1h5V37h-5v-2l-12-3-1 2h-8l-2-5-6-2z" fill="#e95504"/></svg>
        <div class="clip">${mi("反转信号已发出！近一年涨幅超23.8%，每天推荐至少", 857)}</div>
        <span class="bar"></span>
        <svg width="30" height="30" viewBox="0 0 30 30"><path d="M1 1 29 29M29 1 1 29" stroke="#d9601d" stroke-width="2.800"/></svg>
      </div>
      <div class="row sub"><span class="tab on">股吧</span><span class="tab">盘口</span><span class="tab">资讯</span><span class="tab">公告</span><span class="tab">研报</span><span class="tab">财务</span><span class="tab">资料</span></div>
      <div class="foot">
        <div class="idx"><svg class="up" width="21" height="8"><path d="M0 8 10.500 0 21 8z" fill="#777"/></svg><div class="p r">${mi("3883.12", 126)}</div><div class="row">上证${mi("0.20%", 97, "r")}</div></div>
        <div class="act"><svg width="62" height="54" viewBox="0 0 62 54"><g fill="none" stroke="#666" stroke-width="2.800"><path d="M16 6A25.500 25.500 0 0 1 54 40M47 47A25.500 25.500 0 0 1 8 14M9 13 1.500 17M53 40.500 60.500 37M22 15l9 11 9-11M31 26V42M22 26.500H40M22 33.500H40"/></g></svg>交易</div>
        <div class="act"><svg width="54" height="54" viewBox="0 0 54 54"><path d="M39 3H7Q3 3 3 7V47q0 4 4 4H46q4 0 4-4V20" fill="none" stroke="#666" stroke-width="3"/><path d="M44 8l5-6 3 4-5 6zM41 11l6 4L25 35l-6 2 2-6z" fill="#666"/></svg>发帖</div>
        <div class="act"><svg width="50" height="54" viewBox="0 0 50 54"><g fill="none" stroke="#666" stroke-width="2.800"><rect x="2" y="4" width="20" height="21" rx="3"/><rect x="2" y="30" width="20" height="21" rx="3"/><rect x="27" y="30" width="20" height="21" rx="3"/><path d="M37 2.500 48 14.500 37 26.500 26 14.500z" stroke-linejoin="round"/></g></svg>功能</div>
        <div class="act"><svg width="54" height="54" viewBox="0 0 54 54"><circle cx="27" cy="27" r="24.800" fill="none" stroke="#666" stroke-width="2.800"/><g fill="#666"><circle cx="16" cy="27" r="2.800"/><circle cx="27" cy="27" r="2.800"/><circle cx="38" cy="27" r="2.800"/></g></svg>设自选</div>
      </div>
      <div class="row nav">
        <svg width="1080" height="130" viewBox="0 2270 1080 130"><g fill="none" stroke="#9c9c9c" stroke-width="5" stroke-linecap="round" stroke-linejoin="round"><path d="M286.500 2319.500H320M286.500 2335H320M286.500 2350.500H320" /><rect x="518" y="2317.500" width="36" height="35.500" rx="7"/><path d="M780 2317 761 2332q-3 3 0 6L780 2353" stroke-width="4.500"/></g></svg>
      </div>`;
  }
}
